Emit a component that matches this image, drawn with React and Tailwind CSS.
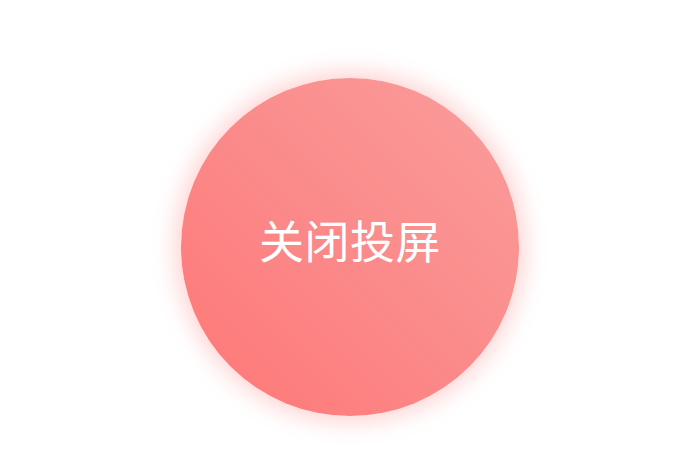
export default function App() {
  return (
    <main className="w-[700px] h-[470px] bg-white flex items-center justify-center pt-[24px]">
      <button
        type="button"
        className="w-[338px] h-[338px] rounded-full bg-gradient-to-bl from-[#f99e9c] via-[#fb8a8a] to-[#ff7676] shadow-[0_0_22px_6px_rgba(255,110,110,0.3)] flex items-center justify-center"
      >
        <span
          className="text-white text-[45px] font-normal tracking-[0.5px] -mt-[14px]"
          style={{ fontFamily: '"Noto Sans CJK SC", "Noto Sans", sans-serif' }}
        >
          关闭投屏
        </span>
      </button>
    </main>
  );
}
